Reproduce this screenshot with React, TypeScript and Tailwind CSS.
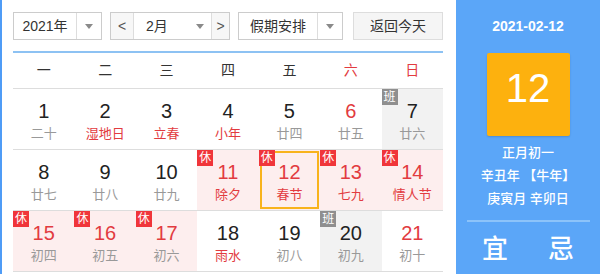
import React from 'react';

type Day = {
  n: number;
  lunar: string;
  redNum?: boolean;
  redLunar?: boolean;
  tag?: 'rest' | 'work';
  selected?: boolean;
};

const weekdays = ['一', '二', '三', '四', '五', '六', '日'];

const days: Day[] = [
  { n: 1, lunar: '二十' },
  { n: 2, lunar: '湿地日', redLunar: true },
  { n: 3, lunar: '立春', redLunar: true },
  { n: 4, lunar: '小年', redLunar: true },
  { n: 5, lunar: '廿四' },
  { n: 6, lunar: '廿五', redNum: true },
  { n: 7, lunar: '廿六', tag: 'work' },
  { n: 8, lunar: '廿七' },
  { n: 9, lunar: '廿八' },
  { n: 10, lunar: '廿九' },
  { n: 11, lunar: '除夕', redNum: true, redLunar: true, tag: 'rest' },
  { n: 12, lunar: '春节', redNum: true, redLunar: true, tag: 'rest', selected: true },
  { n: 13, lunar: '七九', redNum: true, redLunar: true, tag: 'rest' },
  { n: 14, lunar: '情人节', redNum: true, redLunar: true, tag: 'rest' },
  { n: 15, lunar: '初四', redNum: true, tag: 'rest' },
  { n: 16, lunar: '初五', redNum: true, tag: 'rest' },
  { n: 17, lunar: '初六', redNum: true, tag: 'rest' },
  { n: 18, lunar: '雨水', redLunar: true },
  { n: 19, lunar: '初八' },
  { n: 20, lunar: '初九', tag: 'work' },
  { n: 21, lunar: '初十', redNum: true },
];

const Arrow = () => (
  <svg width="8" height="5" viewBox="0 0 8 5">
    <path d="M0 0h8L4 5z" fill="#8a8a8a" />
  </svg>
);

const Cell = ({ d }: { d: Day }) => {
  const bg =
    d.tag === 'rest' ? 'bg-[#fdeeee]' : d.tag === 'work' ? 'bg-[#f2f2f2]' : 'bg-white';
  return (
    <div className={`relative h-[61px] border-b border-[#dddddd] flex flex-col items-center pt-[10px] ${bg}`}>
      {d.selected && (
        <div className="absolute left-[1px] top-[1px] right-[1px] bottom-[1px] border-2 border-[#f8b31c]" />
      )}
      {d.tag && (
        <span
          className={`absolute z-10 left-0 top-0 w-[16px] h-[16px] text-[12px] leading-[16px] text-center text-white ${
            d.tag === 'rest' ? 'bg-[#f0353a]' : 'bg-[#8f8f8f]'
          }`}
        >
          {d.tag === 'rest' ? '休' : '班'}
        </span>
      )}
      <span className={`text-[20px] leading-[24px] ${d.redNum ? 'text-[#e23b40]' : 'text-[#222]'}`}>
        {d.n}
      </span>
      <span className={`mt-[3px] text-[13px] leading-[16px] ${d.redLunar ? 'text-[#e23b40]' : 'text-[#999]'}`}>
        {d.lunar}
      </span>
    </div>
  );
};

export default function App() {
  return (
    <div
      className="w-[600px] h-[274px] flex overflow-hidden bg-white text-[#333]"
      style={{ fontFamily: '"Liberation Sans", "Noto Sans CJK SC", sans-serif' }}
    >
      {/* Calendar */}
      <div className="w-[456px] shrink-0 border-l-2 border-[#4f9cf6] pl-[11px] pr-[13px]">
        {/* Toolbar */}
        <div className="pt-[12px] flex gap-[8px] h-[40px] text-[14px]">
          <div className="w-[89px] h-[28px] flex border border-[#cccccc] bg-white">
            <span className="flex-1 flex items-center justify-center">2021年</span>
            <span className="w-[25px] border-l border-[#dddddd] flex items-center justify-center">
              <Arrow />
            </span>
          </div>
          <div className="w-[120px] h-[28px] flex border border-[#cccccc] bg-white">
            <span className="w-[23px] border-r border-[#dddddd] flex items-center justify-center bg-[#f7f7f7] text-[#555]">
              &lt;
            </span>
            <span className="flex-1 flex items-center pl-[12px]">2月</span>
            <span className="w-[22px] flex items-center justify-center">
              <Arrow />
            </span>
            <span className="w-[18px] border-l border-[#dddddd] flex items-center justify-center bg-[#f7f7f7] text-[#555]">
              &gt;
            </span>
          </div>
          <div className="w-[105px] h-[28px] flex border border-[#cccccc] bg-white">
            <span className="flex-1 flex items-center justify-center">假期安排</span>
            <span className="w-[25px] border-l border-[#dddddd] flex items-center justify-center">
              <Arrow />
            </span>
          </div>
          <div className="ml-[2px] w-[90px] h-[28px] flex items-center justify-center border border-[#dddddd] bg-[#f5f5f5]">
            返回今天
          </div>
        </div>
        <div className="mt-[11px] h-[2px] bg-[#8dc2f3]" />

        {/* Weekday header */}
        <div className="grid grid-cols-7 h-[36px] border-b border-[#dddddd] text-[14px]">
          {weekdays.map((w, i) => (
            <div
              key={w}
              className={`flex items-center justify-center ${i >= 5 ? 'text-[#e23b40]' : 'text-[#333]'}`}
            >
              {w}
            </div>
          ))}
        </div>

        {/* Days */}
        <div className="grid grid-cols-7">
          {days.map((d) => (
            <Cell key={d.n} d={d} />
          ))}
        </div>
      </div>

      {/* Side panel */}
      <div className="flex-1 bg-[#5ba6f8] flex flex-col items-center text-white">
        <div className="pt-[18px] text-[14px] leading-[16px] font-bold">2021-02-12</div>
        <div className="mt-[19px] w-[83px] h-[83px] rounded-[2px] bg-[#fdb10e] flex justify-center pt-[15px] shadow-[0_1px_2px_rgba(0,0,0,0.15)]">
          <span className="text-[40px] leading-[40px]">12</span>
        </div>
        <div className="mt-[5px] flex flex-col items-center text-[13px] leading-[23px] font-medium">
          <span>正月初一</span>
          <span>辛丑年 【牛年】</span>
          <span>庚寅月 辛卯日</span>
        </div>
        <div className="mt-[10px] w-[123px] h-[2px] bg-[#8cc3fa]" />
        <div className="mt-[12px] flex gap-[40px] text-[26px] leading-[30px] font-medium">
          <span>宜</span>
          <span>忌</span>
        </div>
      </div>
    </div>
  );
}
